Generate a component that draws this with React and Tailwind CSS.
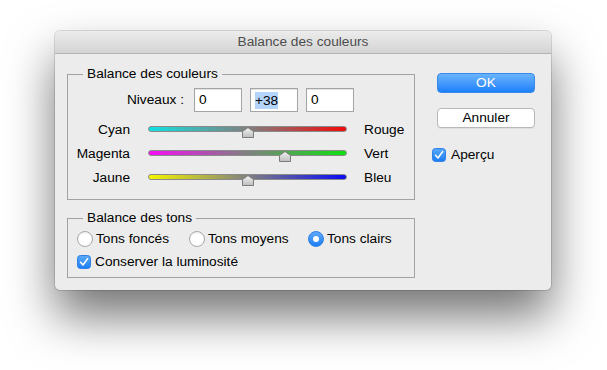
const font = { fontFamily: '"Liberation Sans", Arial, sans-serif' };

function Checkbox() {
    return (
        <svg width="14" height="14" viewBox="0 0 14 14" className="shrink-0">
            <defs>
                <linearGradient id="cbg" x1="0" y1="0" x2="0" y2="1">
                    <stop offset="0" stopColor="#5aaafc" />
                    <stop offset="1" stopColor="#1b7cf4" />
                </linearGradient>
            </defs>
            <rect x="0.5" y="0.5" width="13" height="13" rx="3" fill="url(#cbg)" stroke="#2f7fe6" />
            <path d="M3.6 7.3 L6 10 L10.6 3.6" fill="none" stroke="#fff" strokeWidth="1.6" strokeLinecap="round" strokeLinejoin="round" />
        </svg>
    );
}

function Radio({ checked }) {
    if (checked) {
        return (
            <div className="w-[16px] h-[16px] rounded-full bg-gradient-to-b from-[#5eaafb] to-[#1b7df5] border border-[#2f80e8] flex items-center justify-center shrink-0">
                <div className="w-[6px] h-[6px] rounded-full bg-white" />
            </div>
        );
    }
    return (
        <div className="w-[16px] h-[16px] rounded-full bg-white border border-[#a8a8a8] shadow-[inset_0_1px_1px_rgba(0,0,0,0.08)] shrink-0" />
    );
}

function Field({ children }) {
    return (
        <div className="w-[48px] h-[24px] border border-[#a5a5a5] bg-white shadow-[inset_0_1px_1px_rgba(0,0,0,0.12)] flex items-center pl-[4px] pt-[1px]">
            {children}
        </div>
    );
}

function Slider({ left, right, gradient, pct }) {
    return (
        <div className="flex items-center h-[24px]">
            <div className="w-[62px] text-right pt-[2px]">{left}</div>
            <div className="ml-[18px] w-[199px] relative">
                <div className="h-[6px] rounded-full border border-[#8a8a8a]" style={{ background: gradient }} />
                <svg width="12" height="11" viewBox="0 0 12 11" className="absolute top-[1px] -ml-[6px]" style={{ left: pct + "%" }}>
                    <defs>
                        <linearGradient id={"th" + left} x1="0" y1="0" x2="0" y2="1">
                            <stop offset="0" stopColor="#f4f4f4" />
                            <stop offset="1" stopColor="#bdbdbd" />
                        </linearGradient>
                    </defs>
                    <polygon points="6,0.5 11.5,4.5 11.5,10.5 0.5,10.5 0.5,4.5" fill={"url(#th" + left + ")"} stroke="#7c7c7c" strokeLinejoin="round" />
                </svg>
            </div>
            <div className="ml-[17px] pt-[2px]">{right}</div>
        </div>
    );
}

export default function App() {
    return (
        <div className="w-[607px] h-[370px] bg-white overflow-hidden pt-[31px] text-[13.7px] text-black" style={font}>
            <div className="ml-[55px] w-[496px] h-[259px] rounded-[5px] bg-[#ececec] shadow-[0_0_0_1px_rgba(0,0,0,0.13),0_26px_48px_rgba(0,0,0,0.55)]">
                <div className="h-[23px] rounded-t-[5px] bg-gradient-to-b from-[#ececec] to-[#d4d4d4] border-b border-[#b4b4b4] flex items-center justify-center text-[#4d4d4d]">
                    Balance des couleurs
                </div>
                <div className="flex px-[12px] pt-[12px]">
                    <div className="w-[348px] flex flex-col gap-[10px]">
                        <fieldset className="border border-[#a2a2a2] pb-[10px]">
                            <legend className="ml-[15px] px-[4px] leading-[16px]">Balance des couleurs</legend>
                            <div className="flex items-center h-[24px] mt-[6px] pl-[48px]">
                                <div className="w-[68px] text-right whitespace-nowrap pt-[1px]">Niveaux :</div>
                                <div className="flex gap-[8px] ml-[10px]">
                                    <Field>0</Field>
                                    <Field>
                                        <span className="bg-[#b3d5fd] leading-[17px]">+38</span>
                                    </Field>
                                    <Field>0</Field>
                                </div>
                            </div>
                            <div className="mt-[5px]">
                                <Slider left="Cyan" right="Rouge" pct={50} gradient="linear-gradient(to right,#12e0e0,#808080,#f20a0a)" />
                                <Slider left="Magenta" right="Vert" pct={69} gradient="linear-gradient(to right,#f50cf5,#808080,#0ee00e)" />
                                <Slider left="Jaune" right="Bleu" pct={50} gradient="linear-gradient(to right,#f5f500,#808080,#0a0af5)" />
                            </div>
                        </fieldset>
                        <fieldset className="border border-[#a2a2a2] pb-[5px]">
                            <legend className="ml-[15px] px-[4px] leading-[16px]">Balance des tons</legend>
                            <div className="flex items-center h-[20px] mt-[3px] pl-[9px]">
                                <div className="w-[112px] flex items-center gap-[3px]">
                                    <Radio />
                                    <span>Tons foncés</span>
                                </div>
                                <div className="w-[119px] flex items-center gap-[3px]">
                                    <Radio />
                                    <span>Tons moyens</span>
                                </div>
                                <div className="flex items-center gap-[3px]">
                                    <Radio checked />
                                    <span>Tons clairs</span>
                                </div>
                            </div>
                            <div className="flex items-center h-[20px] mt-[3px] pl-[9px] gap-[4px]">
                                <Checkbox />
                                <span>Conserver la luminosité</span>
                            </div>
                        </fieldset>
                    </div>
                    <div className="ml-[17px] flex flex-col">
                        <button className="ml-[5px] mt-[7px] w-[98px] h-[20px] rounded-[4px] bg-gradient-to-b from-[#6ab4fc] to-[#1a7ffa] border border-[#3a88ee] text-white leading-none">
                            OK
                        </button>
                        <button className="ml-[5px] mt-[15px] w-[98px] h-[20px] rounded-[4px] bg-white border border-[#b8b8b8] shadow-[0_1px_0_rgba(0,0,0,0.05)] leading-none">
                            Annuler
                        </button>
                        <div className="mt-[17px] flex items-center gap-[5px]">
                            <Checkbox />
                            <span>Aperçu</span>
                        </div>
                    </div>
                </div>
            </div>
        </div>
    );
}
